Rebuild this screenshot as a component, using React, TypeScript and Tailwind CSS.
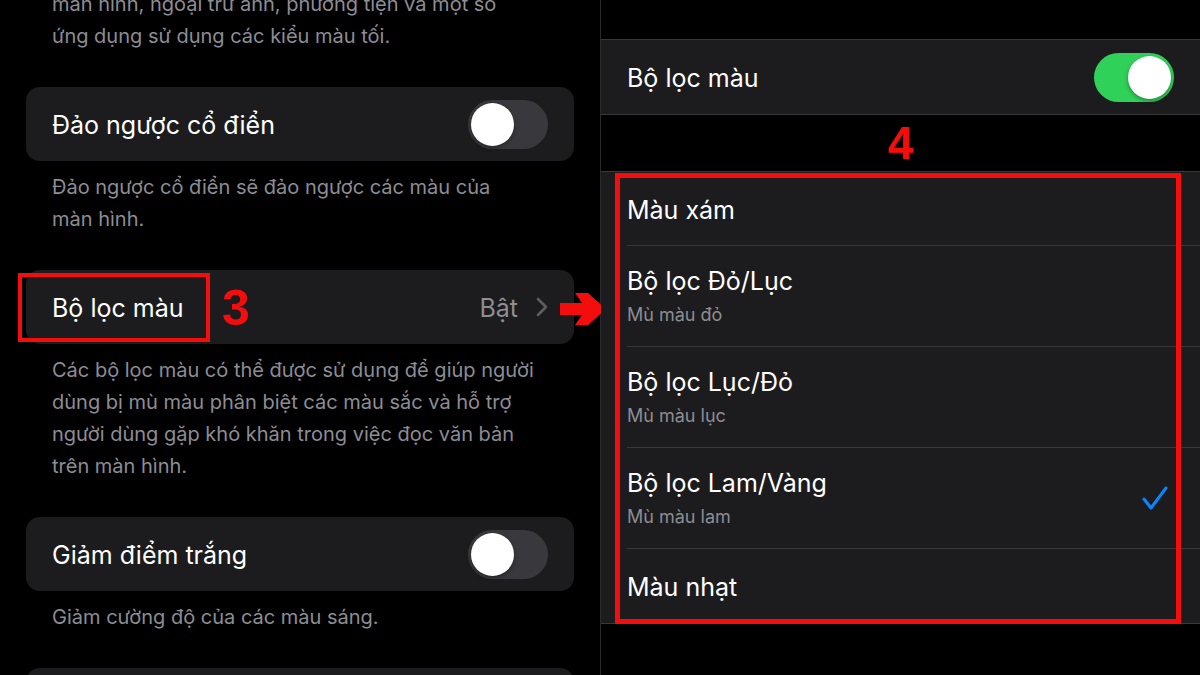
import type { ReactNode } from "react";

const font = { fontFamily: "Inter, 'Noto Sans', sans-serif" };

function Toggle({ on }: { on: boolean }) {
  return (
    <div
      className={`flex h-[49px] w-[80px] shrink-0 items-center rounded-full p-[3px] ${
        on ? "justify-end bg-[#30d158]" : "justify-start bg-[#39393d]"
      }`}
    >
      <div className="h-[43px] w-[43px] rounded-full bg-white shadow-[0_2px_4px_rgba(0,0,0,0.35)]" />
    </div>
  );
}

function Card({ children }: { children: ReactNode }) {
  return (
    <div className="relative flex h-[74px] items-center justify-between rounded-[14px] bg-[#1c1c1e] pl-[26px] pr-[26px]">
      {children}
    </div>
  );
}

function Caption({ children }: { children: ReactNode }) {
  return (
    <p className="px-[26px] pt-[10px] text-[20px] leading-[32px] text-[#8d8d93]">
      {children}
    </p>
  );
}

function Chevron() {
  return (
    <svg width="12" height="20" viewBox="0 0 12 20" fill="none">
      <path d="M2 2l8 8-8 8" stroke="#5d5d62" strokeWidth="2.6" strokeLinecap="round" strokeLinejoin="round" />
    </svg>
  );
}

function Check() {
  return (
    <svg width="26" height="24" viewBox="0 0 26 24" fill="none">
      <path d="M2 13l7 9L24 2" stroke="#0a84ff" strokeWidth="3" strokeLinecap="round" strokeLinejoin="round" />
    </svg>
  );
}

function FilterRow({
  title,
  sub,
  checked,
  last,
}: {
  title: string;
  sub?: string;
  checked?: boolean;
  last?: boolean;
}) {
  return (
    <div className={`ml-[26px] flex items-center justify-between pr-[32px] ${last ? "" : "border-b border-[#38383a]"} ${sub ? "h-[101px]" : "h-[74px]"}`}>
      <div className={`flex flex-col ${sub ? "" : "pt-[2px]"}`}>
        <span className="text-[25px] leading-[30px] text-white">{title}</span>
        {sub && <span className="mt-[8px] text-[18px] leading-[22px] text-[#8d8d93]">{sub}</span>}
      </div>
      {checked && <Check />}
    </div>
  );
}

export default function App() {
  return (
    <div className="flex h-[675px] w-[1200px] overflow-hidden bg-black" style={font}>
      {/* left: accessibility settings */}
      <div className="relative w-[600px] shrink-0 px-[26px]">
        <div className="-mt-[12px] flex flex-col gap-[35px]">
          <p className="px-[26px] text-[20px] leading-[32px] text-[#8d8d93]">
            màn hình, ngoại trừ ảnh, phương tiện và một số
            <br />
            ứng dụng sử dụng các kiểu màu tối.
          </p>

          <div>
            <Card>
              <span className="pt-[3px] text-[25px] text-white">Đảo ngược cổ điển</span>
              <Toggle on={false} />
            </Card>
            <Caption>
              Đảo ngược cổ điển sẽ đảo ngược các màu của
              <br />
              màn hình.
            </Caption>
          </div>

          <div>
            <Card>
              <span className="pt-[3px] text-[25px] text-white">Bộ lọc màu</span>
              <div className="flex items-center gap-[18px]">
                <span className="pt-[3px] text-[25px] text-[#8d8d93]">Bật</span>
                <Chevron />
              </div>
              <div className="absolute left-[-8px] top-[3px] h-[69px] w-[192px] border-[4px] border-[#f30d0d]" />
              <span
                className="absolute left-[196px] top-[10px] text-[50px] font-bold leading-[56px] text-[#f30d0d]"
                style={{ fontFamily: "'Liberation Sans', Arial, sans-serif" }}
              >
                3
              </span>
              <svg className="absolute left-[534px] top-[23px]" width="46" height="32" viewBox="0 0 46 32">
                <polygon points="0,10 22,10 15,0 28,0 46,16 28,32 15,32 22,22 0,22" fill="#f30d0d" />
              </svg>
            </Card>
            <Caption>
              Các bộ lọc màu có thể được sử dụng để giúp người
              <br />
              dùng bị mù màu phân biệt các màu sắc và hỗ trợ
              <br />
              người dùng gặp khó khăn trong việc đọc văn bản
              <br />
              trên màn hình.
            </Caption>
          </div>

          <div>
            <Card>
              <span className="pt-[3px] text-[25px] text-white">Giảm điểm trắng</span>
              <Toggle on={false} />
            </Card>
            <Caption>Giảm cường độ của các màu sáng.</Caption>
          </div>

          <Card>
            <span />
          </Card>
        </div>
      </div>

      {/* right: colour filters */}
      <div className="flex w-[600px] shrink-0 flex-col border-l border-[#2a2a2c] pt-[39px]">
        <div className="flex h-[76px] items-center justify-between border-y border-[#38383a] bg-[#1c1c1e] pl-[26px] pr-[26px]">
          <span className="pt-[3px] text-[25px] text-white">Bộ lọc màu</span>
          <Toggle on />
        </div>

        <div className="flex h-[56px] items-center justify-center">
          <span
            className="text-[46px] font-bold leading-none text-[#f30d0d]"
            style={{ fontFamily: "'Liberation Sans', Arial, sans-serif" }}
          >
            4
          </span>
        </div>

        <div className="relative border-y border-[#38383a] bg-[#1c1c1e]">
          <FilterRow title="Màu xám" />
          <FilterRow title="Bộ lọc Đỏ/Lục" sub="Mù màu đỏ" />
          <FilterRow title="Bộ lọc Lục/Đỏ" sub="Mù màu lục" />
          <FilterRow title="Bộ lọc Lam/Vàng" sub="Mù màu lam" checked />
          <FilterRow title="Màu nhạt" last />
          <div className="absolute bottom-[-1px] left-[14px] right-[19px] top-[1px] border-[5px] border-[#f30d0d]" />
        </div>
      </div>
    </div>
  );
}
